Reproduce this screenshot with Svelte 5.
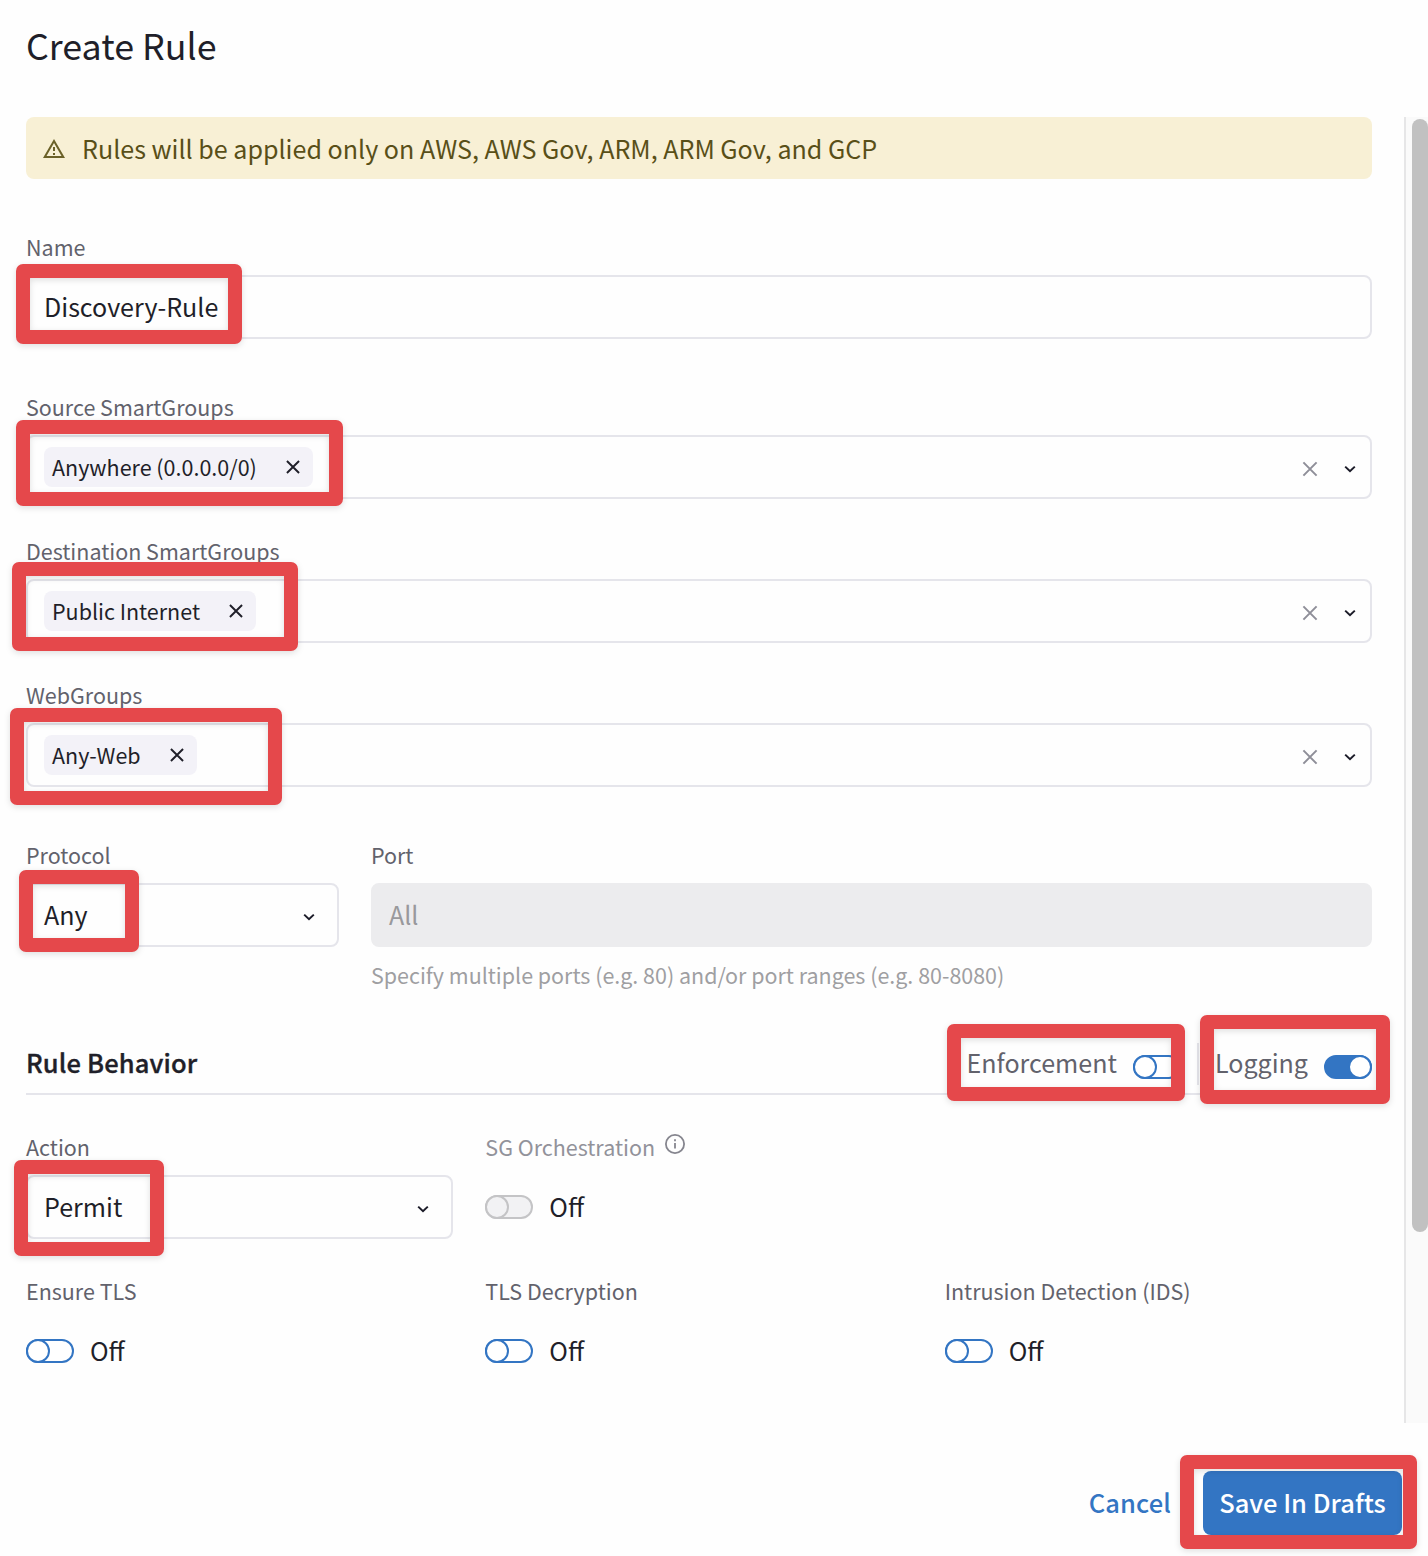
<script>
  const groups = [
    { label: 'Source SmartGroups', tag: 'Anywhere (0.0.0.0/0)' },
    { label: 'Destination SmartGroups', tag: 'Public Internet' },
    { label: 'WebGroups', tag: 'Any-Web' }
  ];
  const marks = ['name', 'source', 'destination', 'web', 'protocol', 'action', 'enforcement', 'logging', 'save'];
</script>

{#snippet chevron()}
  <svg class="chevron" viewBox="0 0 24 24"><path d="M7.2 9.6 12 14.2l4.8-4.6" /></svg>
{/snippet}

{#snippet cross(kind)}
  <svg class="cross {kind}" viewBox="0 0 24 24"><path d="m5.4 5.4 13.2 13.2M18.6 5.4 5.4 18.6" /></svg>
{/snippet}

{#snippet toggle(kind)}
  <span class="toggle {kind}"><i></i></span>
{/snippet}

<main class="dialog">
  <h1>Create Rule</h1>

  <div class="scroll">
    <div class="content">
      <div class="alert">
        <svg class="warn" viewBox="0 0 24 24">
          <path d="M12 5.99 19.53 19H4.47L12 5.99M12 2 1 21h22L12 2zm1 14h-2v2h2v-2zm0-6h-2v4h2v-4z" />
        </svg>
        <span>Rules will be applied only on AWS, AWS Gov, ARM, ARM Gov, and GCP</span>
      </div>

      <section class="name-field">
        <div class="label">Name</div>
        <div class="field"><span class="value">Discovery-Rule</span></div>
      </section>

      <section class="groups">
        {#each groups as g}
          <div>
            <div class="label">{g.label}</div>
            <div class="field select">
              <span class="tag"><span>{g.tag}</span>{@render cross('remove')}</span>
              {@render cross('clear')}
              {@render chevron()}
            </div>
          </div>
        {/each}
      </section>

      <section class="ports">
        <div>
          <div class="label">Protocol</div>
          <div class="field"><span class="value">Any</span>{@render chevron()}</div>
        </div>
        <div>
          <div class="label">Port</div>
          <div class="field disabled"><span class="value">All</span></div>
          <div class="help">Specify multiple ports (e.g. 80) and/or port ranges (e.g. 80-8080)</div>
        </div>
      </section>

      <header class="behavior">
        <h2>Rule Behavior</h2>
        <div class="switch"><span>Enforcement</span>{@render toggle('off')}</div>
        <div class="divider"></div>
        <div class="switch"><span>Logging</span>{@render toggle('on')}</div>
      </header>

      <section class="grid">
        <div>
          <div class="label">Action</div>
          <div class="field"><span class="value">Permit</span>{@render chevron()}</div>
        </div>
        <div>
          <div class="label muted">
            <span>SG Orchestration</span>
            <svg class="info" viewBox="0 0 20 20">
              <circle cx="10" cy="10" r="9.1" />
              <path d="M10 9v5.5M10 5.2v2" />
            </svg>
          </div>
          <div class="state">{@render toggle('inactive')}<span class="value">Off</span></div>
        </div>
        <div></div>
        {#each ['Ensure TLS', 'TLS Decryption', 'Intrusion Detection (IDS)'] as name}
          <div>
            <div class="label">{name}</div>
            <div class="state">{@render toggle('off')}<span class="value">Off</span></div>
          </div>
        {/each}
      </section>
    </div>

    <div class="track"><div class="thumb"></div></div>
  </div>

  <footer>
    <button class="cancel">Cancel</button>
    <button class="save">Save In Drafts</button>
  </footer>

  {#each marks as m}
    <div class="mark {m}"></div>
  {/each}
</main>

<style>
  :global(body) { background: #fefefe; }
  * { box-sizing: border-box; }
  .dialog {
    position: relative;
    display: flex;
    flex-direction: column;
    width: 1428px;
    height: 1556px;
    overflow: hidden;
    background: #fefefe;
    color: #1f1f29;
    font: 25.07px/32px "Noto Sans CJK SC", "Noto Sans", sans-serif;
  }
  h1 {
    margin: 0;
    height: 117px;
    padding: 18px 26px 0;
    font-size: 35.8px;
    font-weight: 400;
    line-height: 52px;
  }
  .scroll { display: flex; height: 1306px; }
  .content { flex: 1; padding: 0 32px 0 26px; }
  .track {
    width: 24px;
    padding: 2px 0 0 6px;
    border-left: 2px solid #e6e6e7;
    background: #fafafa;
  }
  .thumb { width: 16px; height: 1113px; border-radius: 8px; background: #c1c1c1; }

  .alert {
    display: flex;
    align-items: center;
    gap: 16px;
    height: 62px;
    padding: 0 16px;
    border-radius: 8px;
    background: #f8f0d5;
    color: #594f18;
  }
  .warn { width: 24px; height: 24px; margin-top: 2px; fill: #6b6128; }

  .name-field { margin-top: 52px; }
  .groups { display: grid; gap: 36px; margin-top: 52px; }
  .groups + .ports { margin-top: 52px; }
  .label {
    height: 32px;
    margin-bottom: 12px;
    color: #62626c;
    font-size: 21.49px;
    line-height: 31px;
  }
  .muted { display: flex; gap: 10px; color: #92929a; }
  .field {
    display: flex;
    align-items: center;
    height: 64px;
    padding: 0 16px;
    border: 2px solid #e5e5eb;
    border-radius: 8px;
  }
  .value { padding-bottom: 2px; }
  .select { padding-right: 8px; }
  .disabled { border-color: #ececee; background: #ececee; color: #99999c; }
  .tag {
    display: flex;
    align-items: center;
    gap: 25px;
    height: 40px;
    padding: 0 9px 0 8px;
    border-radius: 8px;
    background: #f3f2f8;
    font-size: 21.49px;
  }
  .chevron {
    width: 24px;
    height: 24px;
    margin: 3px 0 0 auto;
    fill: none;
    stroke: #1b1b28;
    stroke-width: 2;
  }
  .cross { flex: none; fill: none; stroke-width: 2; }
  .remove { width: 22px; height: 22px; stroke: #1f1f29; stroke-width: 2.1; }
  .clear { width: 24px; height: 24px; margin: 3px 0 0 auto; stroke: #8e8e98; }
  .clear + .chevron { margin-left: 16px; }

  .ports { display: grid; grid-template-columns: 313px 1fr; gap: 32px; }
  .help { margin-top: 12px; color: #9f9fa2; font-size: 21.46px; line-height: 32px; }

  .behavior {
    display: flex;
    height: 61px;
    margin-top: 43px;
    border-bottom: 2px solid #e5e5eb;
    color: #62626c;
  }
  h2 {
    flex: 1;
    margin: 12px 0 0;
    color: #1f1f29;
    font-size: 25.5px;
    font-weight: 500;
    line-height: 32px;
    letter-spacing: 0.14px;
    -webkit-text-stroke: 0.35px;
  }
  .switch { display: flex; gap: 16px; padding-top: 12px; }
  .switch .toggle { margin-top: 9px; }
  .divider { width: 2px; height: 42px; margin: 9px 16px 0; background: #e5e5eb; }
  .toggle {
    display: block;
    flex: none;
    width: 48px;
    height: 24px;
    border: 2px solid #3375c3;
    border-radius: 12px;
    background: #fff;
  }
  .toggle i {
    display: block;
    width: 24px;
    height: 24px;
    margin: -2px;
    border: 2px solid #3375c3;
    border-radius: 50%;
    background: #fff;
  }
  .on { background: #3375c3; }
  .on i { margin-left: 22px; }
  .inactive, .inactive i { border-color: #c4c4c6; background: #f2f2f4; }

  .grid {
    display: grid;
    grid-template-columns: repeat(3, 1fr);
    gap: 36px 32px;
    margin-top: 36px;
  }
  .state { display: flex; align-items: center; gap: 16px; height: 64px; }
  .info { width: 20px; height: 20px; margin-top: 3px; fill: none; stroke: #85858e; stroke-width: 1.8; }

  footer {
    display: flex;
    justify-content: flex-end;
    gap: 16px;
    padding: 48px 26px 0 0;
  }
  button {
    height: 64px;
    padding: 0 16px 2px;
    border: 0;
    border-radius: 8px;
    font: 500 25.5px/62px "Noto Sans CJK SC", "Noto Sans", sans-serif;
    white-space: nowrap;
  }
  .cancel {
    margin-right: 16px;
    padding: 0 0 2px;
    background: none;
    color: #3375c3;
    letter-spacing: 0.12px;
  }
  button.save { width: 199px; background: #3375c3; color: #fff; }

  /* Highlight frames drawn over the form */
  .mark {
    position: absolute;
    border: 14px solid #e5484b;
    border-radius: 7px;
    filter: drop-shadow(0 2px 3px rgb(0 0 0 / 0.12));
  }
  .mark.name { left: 16px; top: 264px; width: 226px; height: 80px; }
  .mark.source { left: 16px; top: 420px; width: 327px; height: 86px; }
  .mark.destination { left: 12px; top: 562px; width: 286px; height: 89px; }
  .mark.web { left: 10px; top: 708px; width: 272px; height: 97px; }
  .mark.protocol { left: 19px; top: 870px; width: 120px; height: 82px; }
  .mark.action { left: 14px; top: 1160px; width: 150px; height: 96px; }
  .mark.enforcement { left: 947px; top: 1024px; width: 238px; height: 77px; }
  .mark.logging { left: 1200px; top: 1015px; width: 190px; height: 89px; }
  .mark.save { left: 1180px; top: 1455px; width: 237px; height: 94px; }
</style>
